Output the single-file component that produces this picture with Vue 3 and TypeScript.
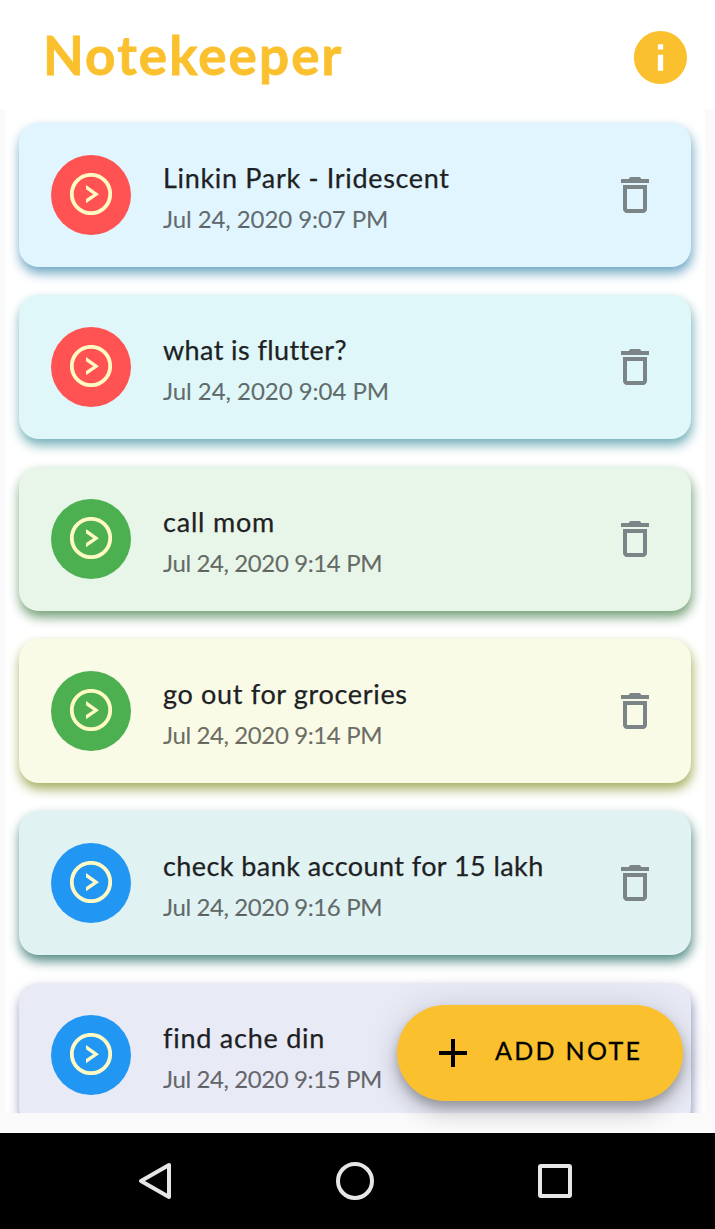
<script setup lang="ts">
interface Note {
  title: string
  date: string
  tone: string
  priority: 'high' | 'medium' | 'low'
  titleSpacing: number
  dateSpacing: number
}

const notes: Note[] = [
  { title: 'Linkin Park - Iridescent', date: 'Jul 24, 2020 9:07 PM', tone: 'sky', priority: 'high', titleSpacing: 0.68, dateSpacing: -0.08 },
  { title: 'what is flutter?', date: 'Jul 24, 2020 9:04 PM', tone: 'cyan', priority: 'high', titleSpacing: 0.4, dateSpacing: -0.04 },
  { title: 'call mom', date: 'Jul 24, 2020 9:14 PM', tone: 'green', priority: 'medium', titleSpacing: 0.8, dateSpacing: -0.39 },
  { title: 'go out for groceries', date: 'Jul 24, 2020 9:14 PM', tone: 'lime', priority: 'medium', titleSpacing: 0.67, dateSpacing: -0.39 },
  { title: 'check bank account for 15 lakh', date: 'Jul 24, 2020 9:16 PM', tone: 'teal', priority: 'low', titleSpacing: 0.43, dateSpacing: -0.39 },
  { title: 'find ache din', date: 'Jul 24, 2020 9:15 PM', tone: 'indigo', priority: 'low', titleSpacing: 0.76, dateSpacing: -0.4 },
]
</script>

<template>
  <div class="screen">
    <header class="bar">
      <h1>Notekeeper</h1>
      <svg class="info" viewBox="2 2 20 20" aria-label="About">
        <path d="M12 2C6.48 2 2 6.48 2 12s4.48 10 10 10 10-4.48 10-10S17.52 2 12 2zm1 15h-2v-6h2v6zm0-8h-2V7h2v2z" />
      </svg>
    </header>

    <main class="list">
      <article v-for="note in notes" :key="note.title" class="card" :class="note.tone">
        <div class="avatar" :class="note.priority">
          <svg viewBox="0 0 42 42">
            <circle cx="21" cy="21" r="19.2" />
            <path d="M16 12v4.200l7.200 5L16 26v4.300l13-9.100z" />
          </svg>
        </div>
        <div class="text">
          <h2><span :style="{ letterSpacing: note.titleSpacing + 'px' }">{{ note.title }}</span></h2>
          <p><span :style="{ letterSpacing: note.dateSpacing + 'px' }">{{ note.date }}</span></p>
        </div>
        <svg class="trash" viewBox="5 3 14 18" aria-label="Delete">
          <path d="M5 4h3.900c.2-.7.7-1 1.400-1h3.400c.7 0 1.200.3 1.400 1H19v2H5z" />
          <path fill-rule="evenodd" d="M6 7h12v12c0 1.100-.9 2-2 2H8c-1.100 0-2-.9-2-2zM8 9v10h8V9z" />
        </svg>
      </article>
    </main>

    <button class="fab">
      <svg viewBox="0 0 28 28"><path d="M12 0h4v12h12v4H16v12h-4V16H0v-4h12z" /></svg>
      <span>ADD NOTE</span>
    </button>

    <nav class="system">
      <svg viewBox="0 0 36 40"><path d="M31 4v32L3 20z" /></svg>
      <svg viewBox="0 0 40 40"><circle cx="20" cy="20" r="17" /></svg>
      <svg viewBox="0 0 40 40"><rect x="5" y="5" width="30" height="30" rx="1" /></svg>
    </nav>
  </div>
</template>

<style>
body {
  margin: 0;
  background: #fafafa;
}
</style>

<style scoped>
.screen {
  position: relative;
  display: flex;
  flex-direction: column;
  width: 715px;
  height: 1229px;
  overflow: hidden;
  background: #fafafa;
  font-family: Lato, 'Open Sans', sans-serif;
}
.bar {
  display: flex;
  flex: none;
  align-items: center;
  justify-content: space-between;
  box-sizing: border-box;
  height: 109px;
  padding: 5px 28px 0 43px;
  background: #fff;
}
h1 {
  margin: 0 0 4px;
  color: #fbc02d;
  font-size: 53px;
  font-weight: 700;
  line-height: 60px;
  letter-spacing: 2.1px;
  -webkit-text-stroke: 0.8px #fbc02d;
}
.info {
  width: 53px;
  height: 53px;
  fill: #fbc02d;
}
.list {
  flex: none;
  box-sizing: border-box;
  width: 700px;
  height: 1004px;
  margin-left: 5px;
  padding: 14px;
  overflow: hidden;
  background: #fff;
}
.card {
  display: flex;
  align-items: center;
  box-sizing: border-box;
  height: 144px;
  margin-bottom: 28px;
  padding: 0 42px 0 32px;
  border-radius: 20px;
}
.sky { background: #e1f5fe; box-shadow: 1px 6px 12px #69a3c1; }
.cyan { background: #dff7f9; box-shadow: 1px 6px 12px #6fadb5; }
.green { background: #e8f5e9; box-shadow: 1px 6px 12px #6f9c72; }
.lime { background: #f9fbe7; box-shadow: 1px 6px 12px #a5ac5c; }
.teal { background: #e0f2f1; box-shadow: 1px 6px 12px #518984; }
.indigo { background: #e8eaf6; box-shadow: 1px 6px 12px #8d91b8; }
.avatar {
  display: flex;
  flex: none;
  align-items: center;
  justify-content: center;
  width: 80px;
  height: 80px;
  border-radius: 50%;
}
.high { background: #ff5252; }
.medium { background: #4caf50; }
.low { background: #2196f3; }
.avatar svg {
  width: 42px;
  height: 42px;
  margin-top: -2px;
}
.avatar circle {
  fill: none;
  stroke: #fff9c4;
  stroke-width: 3.8;
}
.avatar path {
  fill: #fff9c4;
}
.text {
  flex: 1;
  margin-left: 32px;
  padding-top: 6px;
  white-space: nowrap;
}
h2 {
  margin: 0;
  color: #1d2123;
  font-size: 27px;
  font-weight: 400;
  line-height: 40px;
  font-variant-ligatures: none;
  -webkit-text-stroke: 0.25px #1d2123;
}
p {
  margin: 0;
  color: rgba(0, 0, 0, 0.56);
  font-size: 24px;
  line-height: 41px;
  -webkit-text-stroke: 0.2px rgba(0, 0, 0, 0.56);
}
.trash {
  flex: none;
  width: 28px;
  height: 36px;
  fill: #7b8587;
}
.fab {
  position: absolute;
  right: 32px;
  bottom: 128px;
  display: flex;
  align-items: center;
  box-sizing: border-box;
  width: 286px;
  height: 96px;
  padding: 0 0 0 42px;
  border: 0;
  border-radius: 48px;
  background: #fbc02d;
  box-shadow: 0 6px 10px rgba(0, 0, 0, 0.2), 0 12px 20px rgba(0, 0, 0, 0.14), 0 2px 36px rgba(0, 0, 0, 0.12);
  color: #000;
  font-family: inherit;
  font-size: 25px;
}
.fab svg {
  width: 28px;
  height: 28px;
  margin-right: 28px;
}
.fab span {
  padding-bottom: 6px;
  letter-spacing: 2.3px;
  white-space: nowrap;
  -webkit-text-stroke: 0.3px #000;
}
.system {
  position: relative;
  display: flex;
  flex: none;
  align-items: center;
  justify-content: space-between;
  box-sizing: border-box;
  height: 96px;
  margin-top: 20px;
  padding: 0 140px 0 138px;
  background: #000;
}
.system svg {
  height: 40px;
  fill: none;
  stroke: #e6e6e6;
  stroke-width: 4;
  stroke-linejoin: round;
}
</style>
